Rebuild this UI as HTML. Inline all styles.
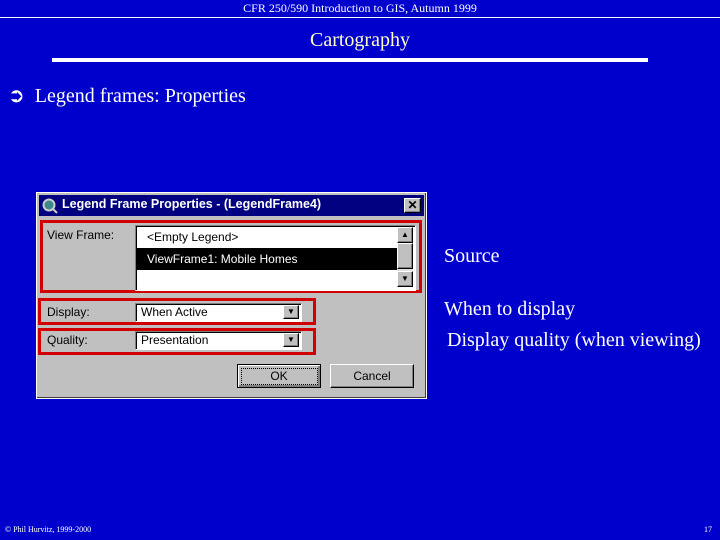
<!DOCTYPE html>
<html><head><style>
body{margin:0;width:720px;height:540px;background:#0000cc;position:relative;overflow:hidden;font-family:"Liberation Serif",serif;color:#fff}
.a{position:absolute}
.s{font-family:"Liberation Sans",sans-serif;font-size:12px;color:#000}
.sunk{background:#fff;border-top:1px solid #808080;border-left:1px solid #808080;border-bottom:1px solid #fff;border-right:1px solid #fff;box-shadow:inset 1px 1px 0 #000}
.btn{background:#c0c0c0;border-top:1px solid #fff;border-left:1px solid #fff;border-right:1px solid #000;border-bottom:1px solid #000;box-shadow:inset -1px -1px 0 #808080;box-sizing:border-box;color:#000}
.red{border:3px solid #d00000;box-sizing:border-box}
</style></head><body>
<div class="a" style="left:0;top:0;width:720px;height:17px;border-bottom:1px solid #fff;font-size:12px;text-align:center;line-height:17px">CFR 250/590 Introduction to GIS, Autumn 1999</div>
<div class="a" style="left:0;top:29px;width:720px;text-align:center;font-size:20px;color:#ffffcc">Cartography</div>
<div class="a" style="left:52px;top:58px;width:596px;height:4px;background:#fff"></div>
<div class="a" style="left:8px;top:83px;font-size:20px">➲&nbsp; Legend frames: Properties</div>
<div class="a" style="left:444px;top:245px;font-size:20px">Source</div>
<div class="a" style="left:444px;top:298px;font-size:20px">When to display</div>
<div class="a" style="left:447px;top:329px;font-size:20px">Display quality (when viewing)</div>
<div class="a" style="left:5px;top:525px;font-size:8px">© Phil Hurvitz, 1999-2000</div>
<div class="a" style="left:704px;top:525px;font-size:8px">17</div>

<div class="a" style="left:36px;top:192px;width:391px;height:207px;background:#c0c0c0;border:1px solid #fff;box-sizing:border-box;box-shadow:inset -1px -1px 0 #404040">
 <div class="a" style="left:2px;top:2px;width:385px;height:21px;background:#000080"></div>
 <svg class="a" style="left:5px;top:5px" width="16" height="16"><circle cx="7" cy="7" r="5.5" fill="#3a8a8a" stroke="#ccc" stroke-width="2"/><line x1="11" y1="11" x2="15" y2="15" stroke="#ccc" stroke-width="2"/></svg>
 <div class="a s" style="left:25px;top:4px;color:#fff;font-weight:bold;font-size:12.5px">Legend Frame Properties - (LegendFrame4)</div>
 <div class="a btn" style="left:367px;top:5px;width:17px;height:15px;font:bold 12px 'Liberation Sans';text-align:center;line-height:13px">✕</div>
 <div class="a red" style="left:3px;top:27px;width:382px;height:73px"></div>
 <div class="a s" style="left:10px;top:35px">View Frame:</div>
 <div class="a sunk" style="left:98px;top:32px;width:279px;height:64px"></div>
 <div class="a s" style="left:110px;top:37px">&lt;Empty Legend&gt;</div>
 <div class="a" style="left:100px;top:55px;width:260px;height:22px;background:#000"></div>
 <div class="a s" style="left:110px;top:59px;color:#fff">ViewFrame1: Mobile Homes</div>
 <div class="a" style="left:360px;top:34px;width:16px;height:60px;background:#e0e0e0"></div>
 <div class="a btn" style="left:360px;top:34px;width:16px;height:16px;font-size:8px;text-align:center;line-height:14px">▲</div>
 <div class="a btn" style="left:360px;top:50px;width:16px;height:26px"></div>
 <div class="a btn" style="left:360px;top:78px;width:16px;height:16px;font-size:8px;text-align:center;line-height:14px">▼</div>
 <div class="a red" style="left:1px;top:105px;width:278px;height:27px"></div>
 <div class="a s" style="left:10px;top:112px">Display:</div>
 <div class="a sunk" style="left:98px;top:110px;width:165px;height:17px"></div>
 <div class="a s" style="left:104px;top:112px">When Active</div>
 <div class="a btn" style="left:246px;top:112px;width:16px;height:14px;font-size:8px;text-align:center;line-height:12px">▼</div>
 <div class="a red" style="left:1px;top:135px;width:278px;height:27px"></div>
 <div class="a s" style="left:10px;top:140px">Quality:</div>
 <div class="a sunk" style="left:98px;top:138px;width:165px;height:17px"></div>
 <div class="a s" style="left:104px;top:140px">Presentation</div>
 <div class="a btn" style="left:246px;top:140px;width:16px;height:14px;font-size:8px;text-align:center;line-height:12px">▼</div>
 <div class="a btn" style="left:200px;top:171px;width:84px;height:24px;border:1px solid #000;box-shadow:inset 1px 1px 0 #fff,inset -2px -2px 0 #808080"></div>
 <div class="a" style="left:204px;top:175px;width:75px;height:15px;border:1px dotted #000"></div>
 <div class="a s" style="left:200px;top:176px;width:84px;text-align:center">OK</div>
 <div class="a btn" style="left:293px;top:171px;width:84px;height:24px"></div>
 <div class="a s" style="left:293px;top:176px;width:84px;text-align:center">Cancel</div>
</div>
</body></html>
